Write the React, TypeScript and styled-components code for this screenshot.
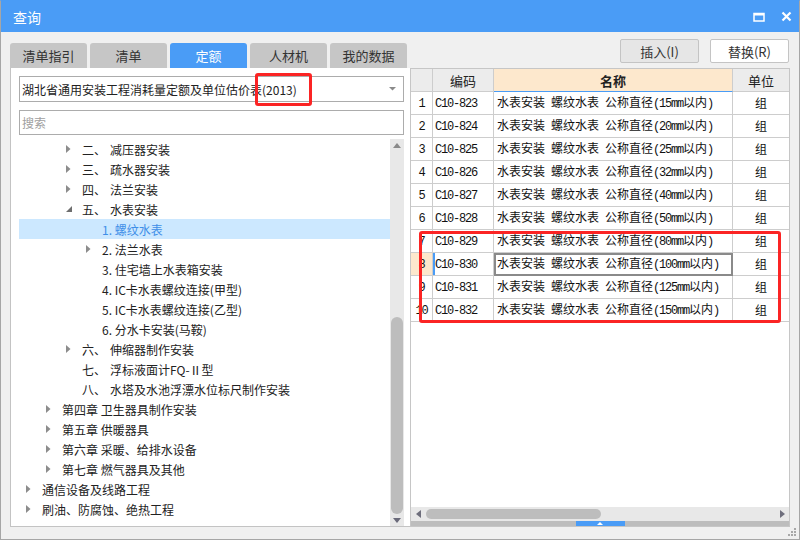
import React from 'react';
import styled, { createGlobalStyle } from 'styled-components';

const GlobalStyle = createGlobalStyle`
    html, body {
        margin: 0;
        padding: 0;
        background: #f0f0f0;
        font-family: "Noto Sans CJK SC", "Microsoft YaHei", sans-serif;
    }
`;

const BLUE = '#4a9cf6';
const GRID = '#cdcdcd';

const Window = styled.div`
    position: relative;
    width: 800px;
    height: 540px;
    box-sizing: border-box;
    border: 1px solid #a6a6a6;
    border-top-color: ${BLUE};
    background: #f0f0f0;
    display: flex;
    flex-direction: column;
    overflow: hidden;
`;

const TitleBar = styled.div`
    height: 31px;
    flex-shrink: 0;
    background: ${BLUE};
    color: #fff;
    display: flex;
    align-items: center;
    padding: 0 7px 0 12px;
    font-size: 14px;
`;

const TitleIcons = styled.div`
    margin-left: auto;
    display: flex;
    align-items: center;
    gap: 16px;
`;

const Body = styled.div`
    flex: 1;
    min-height: 0;
    display: flex;
    padding: 0 9px 12px 9px;
`;

const LeftCol = styled.div`
    width: 400px;
    display: flex;
    flex-direction: column;
    padding-top: 11px;
`;

const TabBar = styled.div`
    display: flex;
    gap: 3px;
    height: 25px;
    flex-shrink: 0;
`;

const Tab = styled.div<{ $active?: boolean }>`
    width: 77px;
    border-radius: 3px 3px 0 0;
    background: ${(p) => (p.$active ? BLUE : '#c6c6c6')};
    color: ${(p) => (p.$active ? '#fff' : '#333')};
    font-size: 13px;
    line-height: 25px;
    text-align: center;
`;

const LeftPanel = styled.div`
    flex: 1;
    min-height: 0;
    background: #fff;
    border-left: 1px solid #c3c3c3;
    border-bottom: 1px solid #c3c3c3;
    padding: 8px 6px 0 8px;
    display: flex;
    flex-direction: column;
`;

const Select = styled.div`
    position: relative;
    height: 26px;
    box-sizing: border-box;
    border: 1px solid #acacac;
    display: flex;
    align-items: center;
    padding: 0 7px 0 2px;
    font-size: 12px;
    color: #222;
    flex-shrink: 0;
`;

const SelectArrow = styled.svg`
    margin-left: auto;
`;

const RedMark = styled.div`
    position: absolute;
    box-sizing: border-box;
    border: 3px solid #fb2424;
    border-radius: 3px;
    pointer-events: none;
`;

const Search = styled.div`
    margin-top: 8px;
    height: 25px;
    box-sizing: border-box;
    border: 1px solid #acacac;
    display: flex;
    align-items: center;
    padding: 0 2px;
    font-size: 12px;
    color: #a0a0a0;
    flex-shrink: 0;
`;

const TreeWrap = styled.div`
    flex: 1;
    min-height: 0;
    margin-top: 4px;
    display: flex;
`;

const TreeList = styled.div`
    flex: 1;
    overflow: hidden;
`;

const TreeRow = styled.div<{ $level: number; $selected?: boolean }>`
    height: 20px;
    display: flex;
    align-items: center;
    padding-left: ${(p) => 3 + p.$level * 20}px;
    background: ${(p) => (p.$selected ? '#cce8ff' : 'transparent')};
    color: ${(p) => (p.$selected ? '#3f8fe8' : '#222')};
    font-size: 12px;
    white-space: pre;
`;

const ArrowBox = styled.span`
    width: 20px;
    height: 20px;
    flex-shrink: 0;
    display: flex;
    align-items: center;
    padding-left: 4px;
    box-sizing: border-box;
`;

const Num = styled.span`
    margin-right: 4px;
`;

const VScroll = styled.div`
    width: 14px;
    background: #e8e8e8;
    display: flex;
    flex-direction: column;
    align-items: center;
`;

const ScrollBtn = styled.div`
    height: 12px;
    flex-shrink: 0;
    display: flex;
    align-items: center;
    justify-content: center;
`;

const Spacer = styled.div`
    flex: 1;
`;

const VThumb = styled.div`
    width: 12px;
    height: 197px;
    border-radius: 6px;
    background: #bdbdbd;
    flex-shrink: 0;
`;

const RightCol = styled.div`
    width: 380px;
    display: flex;
    flex-direction: column;
    padding-top: 7px;
`;

const ButtonRow = styled.div`
    display: flex;
    justify-content: flex-end;
    gap: 11px;
    height: 24px;
    padding-right: 1px;
    margin-bottom: 5px;
    flex-shrink: 0;
`;

const Btn = styled.div<{ $pressed?: boolean }>`
    width: 79px;
    box-sizing: border-box;
    border: 1px solid #c4c4c4;
    border-radius: 2px;
    background: ${(p) => (p.$pressed ? '#e6e6e6' : '#fff')};
    color: #333;
    font-size: 13px;
    display: flex;
    align-items: center;
    justify-content: center;
`;

const TablePanel = styled.div`
    flex: 1;
    min-height: 0;
    border: 1px solid #c6c6c6;
    background: #fff;
    display: flex;
    flex-direction: column;
`;

const GridRow = styled.div`
    display: grid;
    grid-template-columns: 22px 61px 239px 56px;
    height: 23px;
    flex-shrink: 0;
`;

const HeadCell = styled.div<{ $hot?: boolean }>`
    box-sizing: border-box;
    border-right: 1px solid ${GRID};
    border-bottom: 1px solid ${(p) => (p.$hot ? BLUE : GRID)};
    background: ${(p) => (p.$hot ? '#fde8cd' : '#ececec')};
    font-size: 13px;
    font-weight: ${(p) => (p.$hot ? 700 : 400)};
    color: #222;
    display: flex;
    align-items: center;
    justify-content: center;
    &:last-child {
        border-right: none;
    }
`;

const Cell = styled.div<{ $align?: 'left' | 'center'; $pad?: number; $bg?: string; $box?: boolean; $mark?: boolean }>`
    box-sizing: border-box;
    border-right: 1px solid ${GRID};
    border-bottom: 1px solid ${GRID};
    background: ${(p) => p.$bg || '#fff'};
    font-size: 12px;
    color: #111;
    display: flex;
    align-items: center;
    justify-content: ${(p) => (p.$align === 'center' ? 'center' : 'flex-start')};
    padding-left: ${(p) => p.$pad ?? 0}px;
    ${(p) => p.$box && `outline: 2px solid #8a8a8a; outline-offset: -2px;`}
    ${(p) => p.$mark && `box-shadow: inset 2px 0 0 ${BLUE};`}
    &:last-child {
        border-right: none;
    }
`;

const CellText = styled.span`
    white-space: pre;
    line-height: 16px;
`;

const Half = styled.span`
    font-family: "Liberation Mono", monospace;
    letter-spacing: -1.2px;
    white-space: pre;
`;

const RowsArea = styled.div`
    position: relative;
    flex: 1;
    min-height: 0;
`;

const HScroll = styled.div`
    height: 14px;
    flex-shrink: 0;
    background: #e8e8e8;
    display: flex;
    align-items: center;
    padding: 0 4px 0 5px;
`;

const HThumb = styled.div`
    width: 175px;
    height: 10px;
    border-radius: 5px;
    background: #bdbdbd;
    margin-left: 5px;
`;

const Strip = styled.div`
    height: 5px;
    flex-shrink: 0;
    background: #bdbdbd;
    display: flex;
    justify-content: center;
`;

const StripHandle = styled.div`
    width: 49px;
    background: ${BLUE};
    display: flex;
    align-items: center;
    justify-content: center;
`;

const Grip = styled.svg`
    position: absolute;
    right: 2px;
    bottom: 2px;
`;

type TreeNode = { level: number; arrow?: 'right' | 'down'; num?: string; text: string; selected?: boolean };

const tree: TreeNode[] = [
    { level: 2, arrow: 'right', num: '二、', text: '减压器安装' },
    { level: 2, arrow: 'right', num: '三、', text: '疏水器安装' },
    { level: 2, arrow: 'right', num: '四、', text: '法兰安装' },
    { level: 2, arrow: 'down', num: '五、', text: '水表安装' },
    { level: 3, text: '1. 螺纹水表', selected: true },
    { level: 3, arrow: 'right', text: '2. 法兰水表' },
    { level: 3, text: '3. 住宅墙上水表箱安装' },
    { level: 3, text: '4. IC卡水表螺纹连接(甲型)' },
    { level: 3, text: '5. IC卡水表螺纹连接(乙型)' },
    { level: 3, text: '6. 分水卡安装(马鞍)' },
    { level: 2, arrow: 'right', num: '六、', text: '伸缩器制作安装' },
    { level: 2, num: '七、', text: '浮标液面计FQ-Ⅱ型' },
    { level: 2, num: '八、', text: '水塔及水池浮漂水位标尺制作安装' },
    { level: 1, arrow: 'right', text: '第四章 卫生器具制作安装' },
    { level: 1, arrow: 'right', text: '第五章 供暖器具' },
    { level: 1, arrow: 'right', text: '第六章 采暖、给排水设备' },
    { level: 1, arrow: 'right', text: '第七章 燃气器具及其他' },
    { level: 0, arrow: 'right', text: '通信设备及线路工程' },
    { level: 0, arrow: 'right', text: '刷油、防腐蚀、绝热工程' },
];

const sizes = [15, 20, 25, 32, 40, 50, 80, 100, 125, 150];
const rows = sizes.map((s, i) => ({
    no: i + 1,
    code: `C10-${823 + i}`,
    name: `水表安装 螺纹水表 公称直径(${s}mm以内)`,
    unit: '组',
}));

// ascii runs are half width, like the original bitmap song font
const Mixed = ({ text }: { text: string }) => (
    <CellText>
        {text
            .split(/([\x20-\x7e]+)/)
            .filter(Boolean)
            .map((part, i) => (/^[\x20-\x7e]+$/.test(part) ? <Half key={i}>{part}</Half> : part))}
    </CellText>
);

const TreeArrow = ({ dir }: { dir?: 'right' | 'down' }) => {
    if (!dir) return <ArrowBox />;
    return (
        <ArrowBox>
            {dir === 'right' ? (
                <svg width="5" height="8" viewBox="0 0 5 8">
                    <polygon points="0,0 4.5,4 0,8" fill="#8c8c8c" />
                </svg>
            ) : (
                <svg width="7" height="7" viewBox="0 0 7 7">
                    <polygon points="6,0 6,6 0,6" fill="#6e6e6e" />
                </svg>
            )}
        </ArrowBox>
    );
};

const App: React.FC = () => {
    return (
        <>
            <GlobalStyle />
            <Window>
                <TitleBar>
                    <span>查询</span>
                    <TitleIcons>
                        <svg width="12" height="10" viewBox="0 0 12 10">
                            <rect x="1" y="1.5" width="10" height="7.5" fill="none" stroke="#fff" strokeWidth="1.5" />
                            <rect x="1" y="1" width="10" height="2.5" fill="#fff" />
                        </svg>
                        <svg width="11" height="11" viewBox="0 0 11 11">
                            <path d="M1.5 1.5 L9.5 9.5 M9.5 1.5 L1.5 9.5" stroke="#fff" strokeWidth="2.2" />
                        </svg>
                    </TitleIcons>
                </TitleBar>
                <Body>
                    <LeftCol>
                        <TabBar>
                            <Tab>清单指引</Tab>
                            <Tab>清单</Tab>
                            <Tab $active>定额</Tab>
                            <Tab>人材机</Tab>
                            <Tab>我的数据</Tab>
                        </TabBar>
                        <LeftPanel>
                            <Select>
                                湖北省通用安装工程消耗量定额及单位估价表(2013)
                                <SelectArrow width="7" height="4" viewBox="0 0 7 4">
                                    <polygon points="0,0 7,0 3.5,3.5" fill="#8a8a8a" />
                                </SelectArrow>
                                <RedMark style={{ left: 235, top: -4, width: 57, height: 33 }} />
                            </Select>
                            <Search>搜索</Search>
                            <TreeWrap>
                                <TreeList>
                                    {tree.map((n, i) => (
                                        <TreeRow key={i} $level={n.level} $selected={n.selected}>
                                            <TreeArrow dir={n.arrow} />
                                            {n.num && <Num>{n.num}</Num>}
                                            {n.text}
                                        </TreeRow>
                                    ))}
                                </TreeList>
                                <VScroll>
                                    <ScrollBtn>
                                        <svg width="8" height="5" viewBox="0 0 8 5">
                                            <polygon points="0,5 8,5 4,0" fill="#8a8a8a" />
                                        </svg>
                                    </ScrollBtn>
                                    <Spacer />
                                    <VThumb />
                                    <ScrollBtn>
                                        <svg width="8" height="5" viewBox="0 0 8 5">
                                            <polygon points="0,0 8,0 4,5" fill="#6a6a7a" />
                                        </svg>
                                    </ScrollBtn>
                                </VScroll>
                            </TreeWrap>
                        </LeftPanel>
                    </LeftCol>
                    <RightCol>
                        <ButtonRow>
                            <Btn $pressed>插入(I)</Btn>
                            <Btn>替换(R)</Btn>
                        </ButtonRow>
                        <TablePanel>
                            <GridRow>
                                <HeadCell />
                                <HeadCell>编码</HeadCell>
                                <HeadCell $hot>名称</HeadCell>
                                <HeadCell>单位</HeadCell>
                            </GridRow>
                            <RowsArea>
                                {rows.map((r) => {
                                    const current = r.no === 8;
                                    return (
                                        <GridRow key={r.no}>
                                            <Cell $align="center" $bg={current ? '#fde8cd' : undefined}>
                                                <Mixed text={String(r.no)} />
                                            </Cell>
                                            <Cell $pad={2} $mark={current}>
                                                <Mixed text={r.code} />
                                            </Cell>
                                            <Cell $pad={3} $box={current}>
                                                <Mixed text={r.name} />
                                            </Cell>
                                            <Cell $align="center">
                                                <CellText>{r.unit}</CellText>
                                            </Cell>
                                        </GridRow>
                                    );
                                })}
                                <RedMark style={{ left: 8, top: 139, width: 362, height: 92 }} />
                            </RowsArea>
                            <HScroll>
                                <svg width="5" height="8" viewBox="0 0 5 8">
                                    <polygon points="5,0 0,4 5,8" fill="#6e6e7c" />
                                </svg>
                                <HThumb />
                                <Spacer />
                                <svg width="5" height="8" viewBox="0 0 5 8">
                                    <polygon points="0,0 5,4 0,8" fill="#6e6e7c" />
                                </svg>
                            </HScroll>
                            <Strip>
                                <StripHandle>
                                    <svg width="6" height="3" viewBox="0 0 6 3">
                                        <polygon points="0,3 6,3 3,0" fill="#fff" />
                                    </svg>
                                </StripHandle>
                            </Strip>
                        </TablePanel>
                    </RightCol>
                </Body>
                <Grip width="10" height="10" viewBox="0 0 10 10">
                    <rect x="7" y="1" width="2" height="2" fill="#a8a8a8" />
                    <rect x="4" y="4" width="2" height="2" fill="#a8a8a8" />
                    <rect x="7" y="4" width="2" height="2" fill="#a8a8a8" />
                    <rect x="1" y="7" width="2" height="2" fill="#a8a8a8" />
                    <rect x="4" y="7" width="2" height="2" fill="#a8a8a8" />
                    <rect x="7" y="7" width="2" height="2" fill="#a8a8a8" />
                </Grip>
            </Window>
        </>
    );
};

export default App;
